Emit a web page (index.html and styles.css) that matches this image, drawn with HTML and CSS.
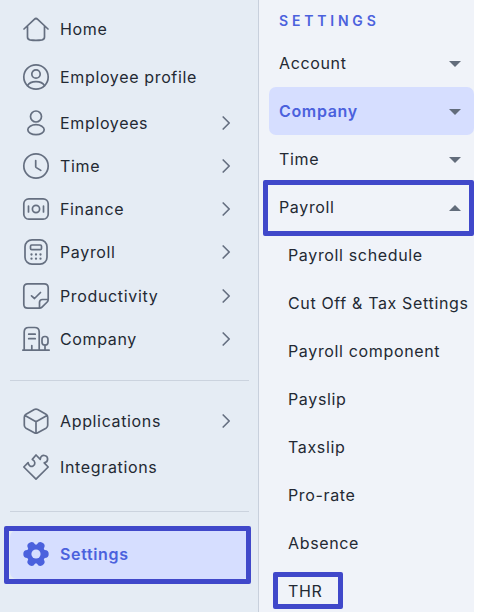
FILE: index.html
```html
<!DOCTYPE html>
<html>
	<head>
		<meta charset="utf-8" />
		<title>Settings</title>
		<link rel="stylesheet" href="styles.css">
	</head>
	<body>
		<!-- shared arrows -->
		<svg class="defs">
			<symbol id="next" viewBox="0 0 10 16"><path d="M2.200 2L8.200 8l-6 6"/></symbol>
			<symbol id="down" viewBox="0 0 12 6"><path d="M0 0h12L6 6z"/></symbol>
			<symbol id="up" viewBox="0 0 12 6"><path d="M0 6h12L6 0z"/></symbol>
		</svg>

		<div class="page">
			<div class="sidebar">
				<div class="item big">
					<svg class="icon" viewBox="0 0 28 28"><path d="M2 14L12.300 4.300q1.700-1.600 3.400 0L26 14M5.500 11v11q0 2.400 2.400 2.900 6.100 1 12.200 0 2.400-.5 2.400-2.900V11"/></svg>
					<span>Home</span>
				</div>
				<div class="item big">
					<svg class="icon" viewBox="0 0 28 28"><circle cx="14" cy="14" r="12.200"/><circle cx="14" cy="11" r="4.200"/><path d="M5.500 22.700c1.500-2.700 4.600-4 8.500-4s7 1.300 8.500 4"/></svg>
					<span>Employee profile</span>
				</div>
				<div class="item">
					<svg class="icon" viewBox="0 0 28 28"><circle cx="14" cy="7.500" r="5.500"/><ellipse cx="14" cy="20.700" rx="8.200" ry="5"/></svg>
					<span>Employees</span>
					<svg class="next"><use href="#next"/></svg>
				</div>
				<div class="item">
					<svg class="icon" viewBox="0 0 28 28"><circle cx="14" cy="14" r="12.200"/><path d="M13.700 8.500v6q0 .7.600 1.100l4.500 2.800"/></svg>
					<span>Time</span>
					<svg class="next"><use href="#next"/></svg>
				</div>
				<div class="item">
					<svg class="icon" viewBox="0 0 28 28"><rect x="1.800" y="3.800" width="24.400" height="20.400" rx="5"/><circle cx="14" cy="14" r="3.600"/><path d="M6.500 11v6M21.500 11v6"/></svg>
					<span>Finance</span>
					<svg class="next"><use href="#next"/></svg>
				</div>
				<div class="item">
					<svg class="icon" viewBox="0 0 28 28"><rect x="3" y="1.800" width="22" height="24.400" rx="7"/><rect x="8.500" y="7" width="11" height="4.600" rx="1.200"/><path class="dots" d="M9.500 16.500h.01M14 16.500h.01M18.500 16.500h.01M9.500 20.700h.01M14 20.700h.01M18.500 20.700h.01"/></svg>
					<span>Payroll</span>
					<svg class="next"><use href="#next"/></svg>
				</div>
				<div class="item tall">
					<svg class="icon" viewBox="0 0 28 28"><path d="M17.500 26.200H5.800q-4 0-4-4V5.800q0-4 4-4h16.400q4 0 4 4v11.700q0 1.500-1 2.500L20 25.200q-1 1-2.500 1zM17.500 26v-5.500q0-3 3-3H26M9.500 13.800l3 2.700 6-6"/></svg>
					<span>Productivity</span>
					<svg class="next"><use href="#next"/></svg>
				</div>
				<div class="item">
					<svg class="icon" viewBox="0 0 28 28"><path d="M.8 25.200h26.400M2.200 25V7q0-4.500 4.500-4.500h6Q17.200 2.500 17.200 7v18M6.700 9.200h6.500M6.700 13.700h6.500M9.800 25v-4.500M23 25v-5"/><rect x="20" y="11.500" width="6" height="8.500" rx="2.800"/></svg>
					<span>Company</span>
					<svg class="next"><use href="#next"/></svg>
				</div>

				<div class="line"></div>

				<div class="item tall">
					<svg class="icon" viewBox="0 0 28 28"><path d="M12.300 2.500q1.700-.9 3.400 0l8.300 4.700q1.700 1 1.700 3v8q0 2-1.700 3l-8.300 4.500q-1.700.9-3.400 0L4 21.200q-1.700-1-1.700-3v-8q0-2 1.700-3zM3 8.500l11 6.200 11-6.200M14 14.700V26"/></svg>
					<span>Applications</span>
					<svg class="next"><use href="#next"/></svg>
				</div>
				<div class="item big">
					<svg class="icon" viewBox="0 0 28 28"><path d="M1.800 14l4.300-4.300c.4 3.300 3 4.300 5 3.200 2.500-1.300 2.400-5-.8-6.500L14 2l4.300 4.300c.2-3 2-4 4-3.800 4.400.5 4.500 6.600-.1 7.400L26.200 14 14 26.200z"/></svg>
					<span>Integrations</span>
				</div>

				<div class="line"></div>

				<div class="item active marked">
					<svg class="gear" viewBox="0 0 28 28">
						<circle class="core" cx="14" cy="14" r="9.500"/>
						<path class="teeth" d="M5.300 14h17.400M9.500 6.200l9 15.600M18.500 6.200l-9 15.600"/>
						<circle class="hole" cx="14" cy="14" r="4.600"/>
					</svg>
					<span>Settings</span>
				</div>
			</div>

			<div class="menu">
				<div class="title">SETTINGS</div>
				<div class="row">Account<svg class="arrow"><use href="#down"/></svg></div>
				<div class="row active">Company<svg class="arrow"><use href="#down"/></svg></div>
				<div class="row">Time<svg class="arrow"><use href="#down"/></svg></div>
				<div class="row marked">Payroll<svg class="arrow"><use href="#up"/></svg></div>
				<div class="row sub">Payroll schedule</div>
				<div class="row sub">Cut Off &amp; Tax Settings</div>
				<div class="row sub">Payroll component</div>
				<div class="row sub">Payslip</div>
				<div class="row sub">Taxslip</div>
				<div class="row sub">Pro-rate</div>
				<div class="row sub">Absence</div>
				<div class="row sub"><span class="thr marked">THR</span></div>
			</div>
		</div>
	</body>
</html>
```

FILE: styles.css
```css
*{
	box-sizing: border-box;
}
body{
	margin: 0;
	background-color: #fff;
	font-family: Inter, "Liberation Sans", sans-serif;
	font-size: 16px;
	letter-spacing: 0.65px;
	color: #232933;
}
.defs{
	display: none;
}
.page{
	display: flex;
	width: 474px;
	height: 612px;
	overflow: hidden;
}

/* left navigation */
.sidebar{
	width: 259px;
	padding: 5px 9px 0 10px;
	background-color: #e5ecf4;
	border-right: 1px solid #c8d0dc;
}
.item{
	display: flex;
	align-items: center;
	height: 43.15px;
	padding: 0 18px 0 12px;
}
.item.tall{
	height: 44px;
}
.item.big{
	height: 48px;
}
.icon,
.gear{
	width: 28px;
	height: 28px;
	margin-right: 10px;
}
.icon,
.next{
	fill: none;
	stroke: #656f80;
	stroke-width: 1.7;
	stroke-linecap: round;
	stroke-linejoin: round;
}
.icon .dots{
	stroke-width: 2.3;
}
.next{
	width: 10px;
	height: 16px;
	margin-left: auto;
}
.line{
	height: 1px;
	margin: 19.25px 0 18px;
	background-color: #cbd3de;
}
.big + .line{
	margin-top: 20px;
}
.item.active{
	height: 49px;
}
.active{
	border-radius: 7px;
	background-color: #d6deff;
	color: #4b61dd;
	font-weight: 600;
}
.core{
	fill: #4b61dd;
}
.teeth{
	stroke: #4b61dd;
	stroke-width: 8;
	stroke-linecap: round;
}
.hole{
	fill: #d6deff;
}

/* settings menu */
.menu{
	width: 215px;
	padding-left: 10px;
	background-color: #f0f3f9;
}
.title{
	height: 39px;
	padding: 11px 0 0 10px;
	font-size: 14px;
	line-height: 20px;
	font-weight: 600;
	letter-spacing: 3.8px;
	color: #4b61dd;
}
.row{
	display: flex;
	align-items: center;
	height: 48px;
	padding: 0 13px 0 10px;
	white-space: nowrap;
}
.row.sub{
	padding: 0 0 0 19px;
}
.arrow{
	width: 12px;
	height: 6px;
	margin-top: 1px;
	margin-left: auto;
	fill: #626c7b;
}

/* frames over the marked entries */
.marked{
	position: relative;
}
.marked::after{
	content: "";
	position: absolute;
	border: 5px solid #4048ca;
	border-radius: 2px;
}
.item.marked::after{
	inset: -4px -2px -5px -6px;
}
.row.marked::after{
	inset: -3px 0 -5px -6px;
}
.thr.marked::after{
	inset: -9px -21px -8px -15px;
}
```
